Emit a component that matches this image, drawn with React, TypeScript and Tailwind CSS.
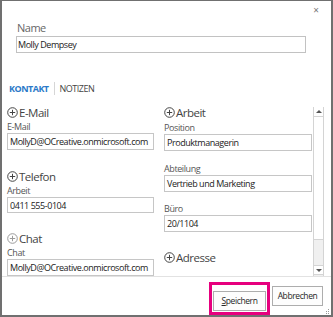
import React from "react";

const font = { fontFamily: '"Open Sans", "Noto Sans", sans-serif' };

function PlusCircle({ light = false }: { light?: boolean }) {
  const c = light ? "#9a9a9a" : "#444444";
  return (
    <svg width="11" height="11" viewBox="0 0 11 11" className="shrink-0">
      <circle cx="5.5" cy="5.5" r="4.8" fill="none" stroke={c} strokeWidth="1" />
      <line x1="5.5" y1="2.8" x2="5.5" y2="8.2" stroke={c} strokeWidth="1" />
      <line x1="2.8" y1="5.5" x2="8.2" y2="5.5" stroke={c} strokeWidth="1" />
    </svg>
  );
}

function Heading({ text, light = false, className = "" }: { text: string; light?: boolean; className?: string }) {
  return (
    <div className={`flex items-center h-[15px] gap-[1px] ${className}`}>
      <PlusCircle light={light} />
      <span className="text-[11.5px] leading-[15px] tracking-[-0.5px] text-[#444]">{text}</span>
    </div>
  );
}

function Label({ text, className = "" }: { text: string; className?: string }) {
  return <div className={`text-[9px] leading-[12px] tracking-[-0.4px] text-[#555] ${className}`}>{text}</div>;
}

function Field({ value }: { value: string }) {
  return (
    <div className="h-[17px] border border-[#c6c6c6] bg-white px-[2px] text-[9px] leading-[15px] tracking-[-0.45px] text-[#222] whitespace-nowrap overflow-hidden">
      {value}
    </div>
  );
}

export default function App() {
  return (
    <div
      className="w-[333px] h-[317px] bg-white border-l-2 border-t border-r-2 border-b-2 border-[#707070] flex flex-col relative overflow-hidden"
      style={font}
    >
      {/* close row */}
      <div className="h-[19px] flex justify-end pr-[12px] pt-[4px]">
        <span className="text-[10px] leading-[10px] text-[#777]">×</span>
      </div>

      {/* Name */}
      <div className="pl-[15px] h-[16px] text-[11px] leading-[16px] tracking-[-0.5px] text-[#666]">Name</div>
      <div className="ml-[14px] w-[290px] h-[17px] border border-[#c2c2c2] px-[1px] text-[9px] leading-[15px] tracking-[-0.45px] text-[#222]">
        Molly Dempsey
      </div>

      {/* Tabs */}
      <div className="mt-[29px] h-[14px] pl-[7px] flex items-center text-[9px] leading-[14px] tracking-[-0.5px]">
        <span className="font-bold text-[#2b79c8]">KONTAKT</span>
        <span className="mx-[5px] w-px h-[13px] bg-[#d6d6d6]" />
        <span className="text-[#444]">NOTIZEN</span>
      </div>

      {/* Scroll area */}
      <div className="mt-[4px] h-[177px] flex overflow-hidden">
        <div className="w-[311px] pl-[5px] flex gap-[10px] overflow-hidden">
          {/* left column */}
          <div className="w-[147px] flex flex-col">
            <Heading text="E-Mail" className="mt-[5px]" />
            <Label text="E-Mail" className="mt-[1px]" />
            <Field value="MollyD@OCreative.onmicrosoft.com" />
            <Heading text="Telefon" className="mt-[19px]" />
            <Label text="Arbeit" className="mt-[1px]" />
            <Field value="0411 555-0104" />
            <Heading text="Chat" light className="mt-[18px]" />
            <Label text="Chat" className="mt-[1px]" />
            <Field value="MollyD@OCreative.onmicrosoft.com" />
          </div>
          {/* right column */}
          <div className="w-[148px] flex flex-col">
            <Heading text="Arbeit" className="mt-[5px]" />
            <Label text="Position" className="mt-[2px]" />
            <Field value="Produktmanagerin" />
            <Label text="Abteilung" className="mt-[12px]" />
            <Field value="Vertrieb und Marketing" />
            <Label text="Büro" className="mt-[11px]" />
            <Field value="20/1104" />
            <Heading text="Adresse" className="mt-[18px]" />
          </div>
        </div>
        {/* scrollbar */}
        <div className="w-[11px] mt-[7px] flex flex-col border-x border-[#d4d4d4] bg-[#f0f0f0]">
          <div className="h-[10px] bg-white border-b border-[#d4d4d4] flex items-center justify-center">
            <div className="w-0 h-0 border-l-[3px] border-r-[3px] border-b-[3px] border-l-transparent border-r-transparent border-b-[#555]" />
          </div>
          <div className="h-[123px] bg-white border-b border-[#d4d4d4]" />
          <div className="flex-1" />
          <div className="h-[10px] bg-white border-t border-b border-[#d4d4d4] flex items-center justify-center mb-[1px]">
            <div className="w-0 h-0 border-l-[3px] border-r-[3px] border-t-[3px] border-l-transparent border-r-transparent border-t-[#555]" />
          </div>
        </div>
      </div>

      {/* Footer */}
      <div className="flex-1 border-t border-[#e2e2e2] flex justify-end items-start pt-[5px] pr-[8px] gap-[2px] relative">
        <div className="border-[3px] border-[#e6007e] p-[1px]">
          <button className="w-[53px] h-[20px] border border-[#adadad] bg-[#fdfdfd] text-[8.5px] leading-[18px] tracking-[-0.4px] text-[#262626]">
            <span className="underline">S</span>peichern
          </button>
        </div>
        <button className="mt-[4px] w-[51px] h-[20px] border border-[#adadad] bg-[#fdfdfd] text-[8.5px] leading-[18px] tracking-[-0.4px] text-[#262626]">
          Abbrechen
        </button>
        <svg width="5" height="5" viewBox="0 0 5 5" className="absolute right-[1px] bottom-[1px]">
          <rect x="3" y="0" width="1" height="1" fill="#999" />
          <rect x="1" y="2" width="1" height="1" fill="#999" />
          <rect x="3" y="2" width="1" height="1" fill="#999" />
          <rect x="3" y="4" width="1" height="1" fill="#999" />
          <rect x="1" y="4" width="1" height="1" fill="#999" />
        </svg>
      </div>
    </div>
  );
}
